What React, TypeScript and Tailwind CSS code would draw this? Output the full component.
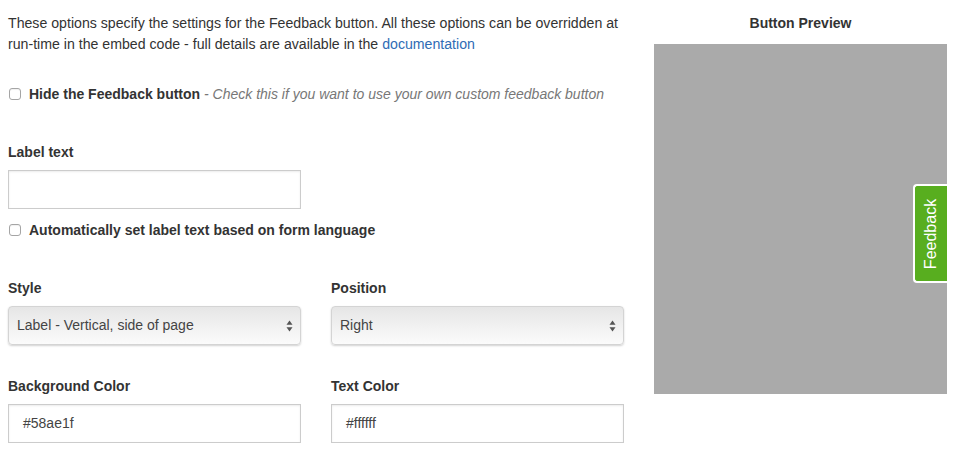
import React from "react";

const FONT = { fontFamily: '"Liberation Sans", Arial, Helvetica, sans-serif' };

function Checkbox() {
  return (
    <span className="inline-block h-[12px] w-[12px] shrink-0 rounded-[3px] border border-[#a5a5a5] bg-white shadow-[inset_0_1px_1px_rgba(0,0,0,0.06)]" />
  );
}

function Select({ value }: { value: string }) {
  return (
    <div className="relative flex h-[39px] w-[293px] items-center rounded-[4px] border border-[#d4d4d4] bg-gradient-to-b from-[#e6e6e6] to-[#fbfbfb] pl-[8px] shadow-[0_1px_2px_rgba(0,0,0,0.18)]">
      <span className="text-[14px] text-[#444]">{value}</span>
      <svg className="absolute right-[7px] top-1/2 -translate-y-1/2" width="7" height="12" viewBox="0 0 7 12">
        <path d="M3.5 0.5 L6.5 4.8 H0.5 Z" fill="#555" />
        <path d="M3.5 11.5 L6.5 7.2 H0.5 Z" fill="#555" />
      </svg>
    </div>
  );
}

function TextInput({ value }: { value?: string }) {
  return (
    <div className="flex h-[39px] w-[293px] items-center border border-[#cccccc] bg-white pl-[14px] shadow-[inset_0_1px_2px_rgba(0,0,0,0.08)]">
      <span className="text-[14px] text-[#444]">{value}</span>
    </div>
  );
}

export default function App() {
  return (
    <div className="flex h-[460px] w-[954px] bg-white text-[14px] text-[#333]" style={FONT}>
      {/* options */}
      <div className="w-[646px] pl-[8px] pt-[13px]">
        <p className="w-[625px] text-[14.15px] leading-[21px]">
          These options specify the settings for the Feedback button. All these options can be overridden at
          run-time in the embed code - full details are available in the{" "}
          <a className="text-[#2f6cb5]">documentation</a>
        </p>

        <label className="mt-[29px] flex h-[20px] items-center gap-[8px] pl-[1px]">
          <Checkbox />
          <span>
            <span className="font-bold">Hide the Feedback button</span>{" "}
            <span className="italic text-[#777]">- Check this if you want to use your own custom feedback button</span>
          </span>
        </label>

        <div className="mt-[38px] font-bold leading-[20px]">Label text</div>
        <div className="mt-[8px]">
          <TextInput />
        </div>
        <label className="mt-[11px] flex h-[20px] items-center gap-[8px] pl-[1px]">
          <Checkbox />
          <span className="font-bold">Automatically set label text based on form language</span>
        </label>

        <div className="mt-[38px] flex gap-[30px]">
          <div>
            <div className="font-bold leading-[20px]">Style</div>
            <div className="mt-[8px]">
              <Select value="Label - Vertical, side of page" />
            </div>
          </div>
          <div>
            <div className="font-bold leading-[20px]">Position</div>
            <div className="mt-[8px]">
              <Select value="Right" />
            </div>
          </div>
        </div>

        <div className="mt-[31px] flex gap-[30px]">
          <div>
            <div className="font-bold leading-[20px]">Background Color</div>
            <div className="mt-[8px]">
              <TextInput value="#58ae1f" />
            </div>
          </div>
          <div>
            <div className="font-bold leading-[20px]">Text Color</div>
            <div className="mt-[8px]">
              <TextInput value="#ffffff" />
            </div>
          </div>
        </div>
      </div>

      {/* preview */}
      <div className="ml-[8px] w-[293px] pt-[13px]">
        <div className="text-center font-bold leading-[20px]">Button Preview</div>
        <div className="mt-[11px] flex h-[350px] items-start justify-end bg-[#aaaaaa]">
          <div className="mt-[140px] flex h-[99px] w-[34px] items-center justify-center rounded-l-[4px] border-2 border-r-0 border-white bg-[#58ae1f]">
            <span className="-rotate-90 whitespace-nowrap text-[16px] text-white">Feedback</span>
          </div>
        </div>
      </div>
    </div>
  );
}
